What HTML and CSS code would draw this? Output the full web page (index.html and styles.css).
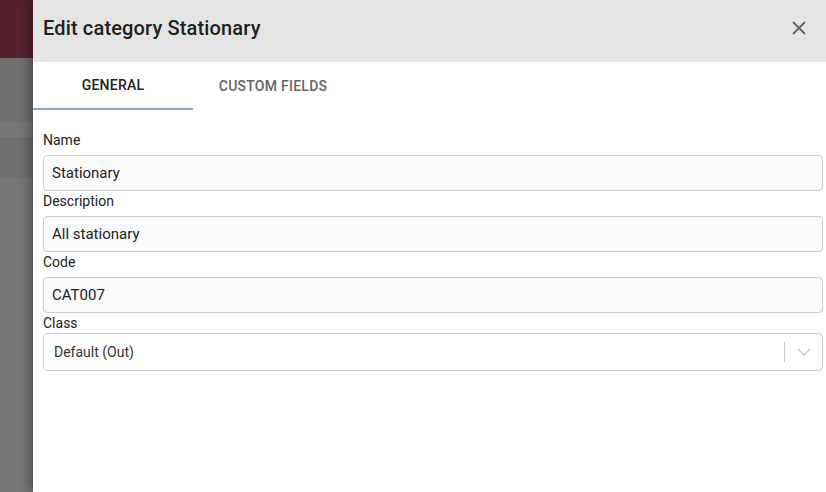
FILE: index.html
```html
<!DOCTYPE html>
<html lang="en">
<head>
  <meta charset="UTF-8">
  <title>Edit category Stationary</title>
  <link rel="stylesheet" href="styles.css">
</head>
<body>
  <!-- page behind the drawer -->
  <div class="backdrop">
    <div class="topbar"></div>
    <div class="row"></div>
    <div class="row light"></div>
    <div class="row tall"></div>
    <div class="row light rest"></div>
  </div>

  <div class="drawer">
    <div class="drawer-header">
      <h1>Edit category Stationary</h1>
      <button class="close" type="button" aria-label="Close">
        <svg width="14" height="14" viewBox="0 0 14 14">
          <path d="M1 1 L13 13 M13 1 L1 13" stroke="#666" stroke-width="1.8" fill="none"/>
        </svg>
      </button>
    </div>

    <ul class="tabs">
      <li class="tab active">General</li>
      <li class="tab">Custom fields</li>
    </ul>

    <form class="form">
      <label for="name">Name</label>
      <input type="text" id="name" value="Stationary">
      <label for="description">Description</label>
      <input type="text" id="description" value="All stationary">
      <label for="code">Code</label>
      <input type="text" id="code" value="CAT007">
      <label class="tight">Class</label>
      <div class="select">
        <span class="select-value">Default (Out)</span>
        <span class="select-sep"></span>
        <span class="select-arrow">
          <svg width="14" height="8" viewBox="0 0 14 8">
            <path d="M1 1 L7 7 L13 1" stroke="#ccc" stroke-width="1.6" fill="none"/>
          </svg>
        </span>
      </div>
    </form>
  </div>
</body>
</html>
```

FILE: styles.css
```css
/* Page */
body {
  margin: 0;
  display: flex;
  height: 492px;
  overflow: hidden;
  font-family: Roboto, "Liberation Sans", Arial, sans-serif;
  background-color: #767676;
}

/* Backdrop */
.backdrop {
  width: 33px;
  display: flex;
  flex-direction: column;
}
.topbar {
  height: 58px;
  background-color: #56202f;
}
.row {
  height: 64px;
  background-color: #6f6f6f;
}
.row.light {
  height: 15px;
  background-color: #777;
}
.row.tall {
  height: 41px;
}
.row.rest {
  flex: 1;
}

/* Drawer */
.drawer {
  flex: 1;
  background-color: white;
  box-shadow: -4px 0 10px rgba(0, 0, 0, 0.3);
  position: relative;
}
.drawer-header {
  height: 62px;
  box-sizing: border-box;
  background-color: #e4e4e4;
  display: flex;
  align-items: center;
  justify-content: space-between;
  padding: 0 20px 6px 10px;
}
.drawer-header h1 {
  margin: 0;
  font-size: 20px;
  font-weight: 500;
  letter-spacing: 0.15px;
  color: #212121;
}
.close {
  border: none;
  background: none;
  padding: 0;
  width: 14px;
  height: 14px;
  display: flex;
  cursor: pointer;
}

/* Tabs */
.tabs {
  list-style-type: none;
  margin: 0;
  padding: 0;
  display: flex;
}
.tab {
  width: 160px;
  height: 48px;
  display: flex;
  align-items: center;
  justify-content: center;
  font-size: 14px;
  font-weight: 500;
  letter-spacing: 0.25px;
  text-transform: uppercase;
  color: #666;
  box-sizing: border-box;
}
.tab.active {
  color: #222;
  border-bottom: 2px solid #8ca8d0;
}

/* Form */
.form {
  display: flex;
  flex-direction: column;
  padding: 20px 3px 0 10px;
}
.form label {
  font-size: 14px;
  line-height: 20px;
  color: #222;
  margin-bottom: 5px;
}
.form label.tight {
  margin-bottom: 0;
}
.form input {
  height: 36px;
  box-sizing: border-box;
  border: 1px solid #ccc;
  border-radius: 4px;
  background-color: #fafafa;
  padding: 0 8px;
  font-family: inherit;
  font-size: 15px;
  color: #222;
}
.select {
  height: 38px;
  box-sizing: border-box;
  border: 1px solid #ccc;
  border-radius: 4px;
  background-color: white;
  display: flex;
  align-items: center;
}
.select-value {
  flex: 1;
  padding-left: 10px;
  font-size: 14px;
  color: #333;
}
.select-sep {
  width: 1px;
  height: 20px;
  background-color: #ccc;
}
.select-arrow {
  width: 37px;
  display: flex;
  justify-content: center;
}
```
